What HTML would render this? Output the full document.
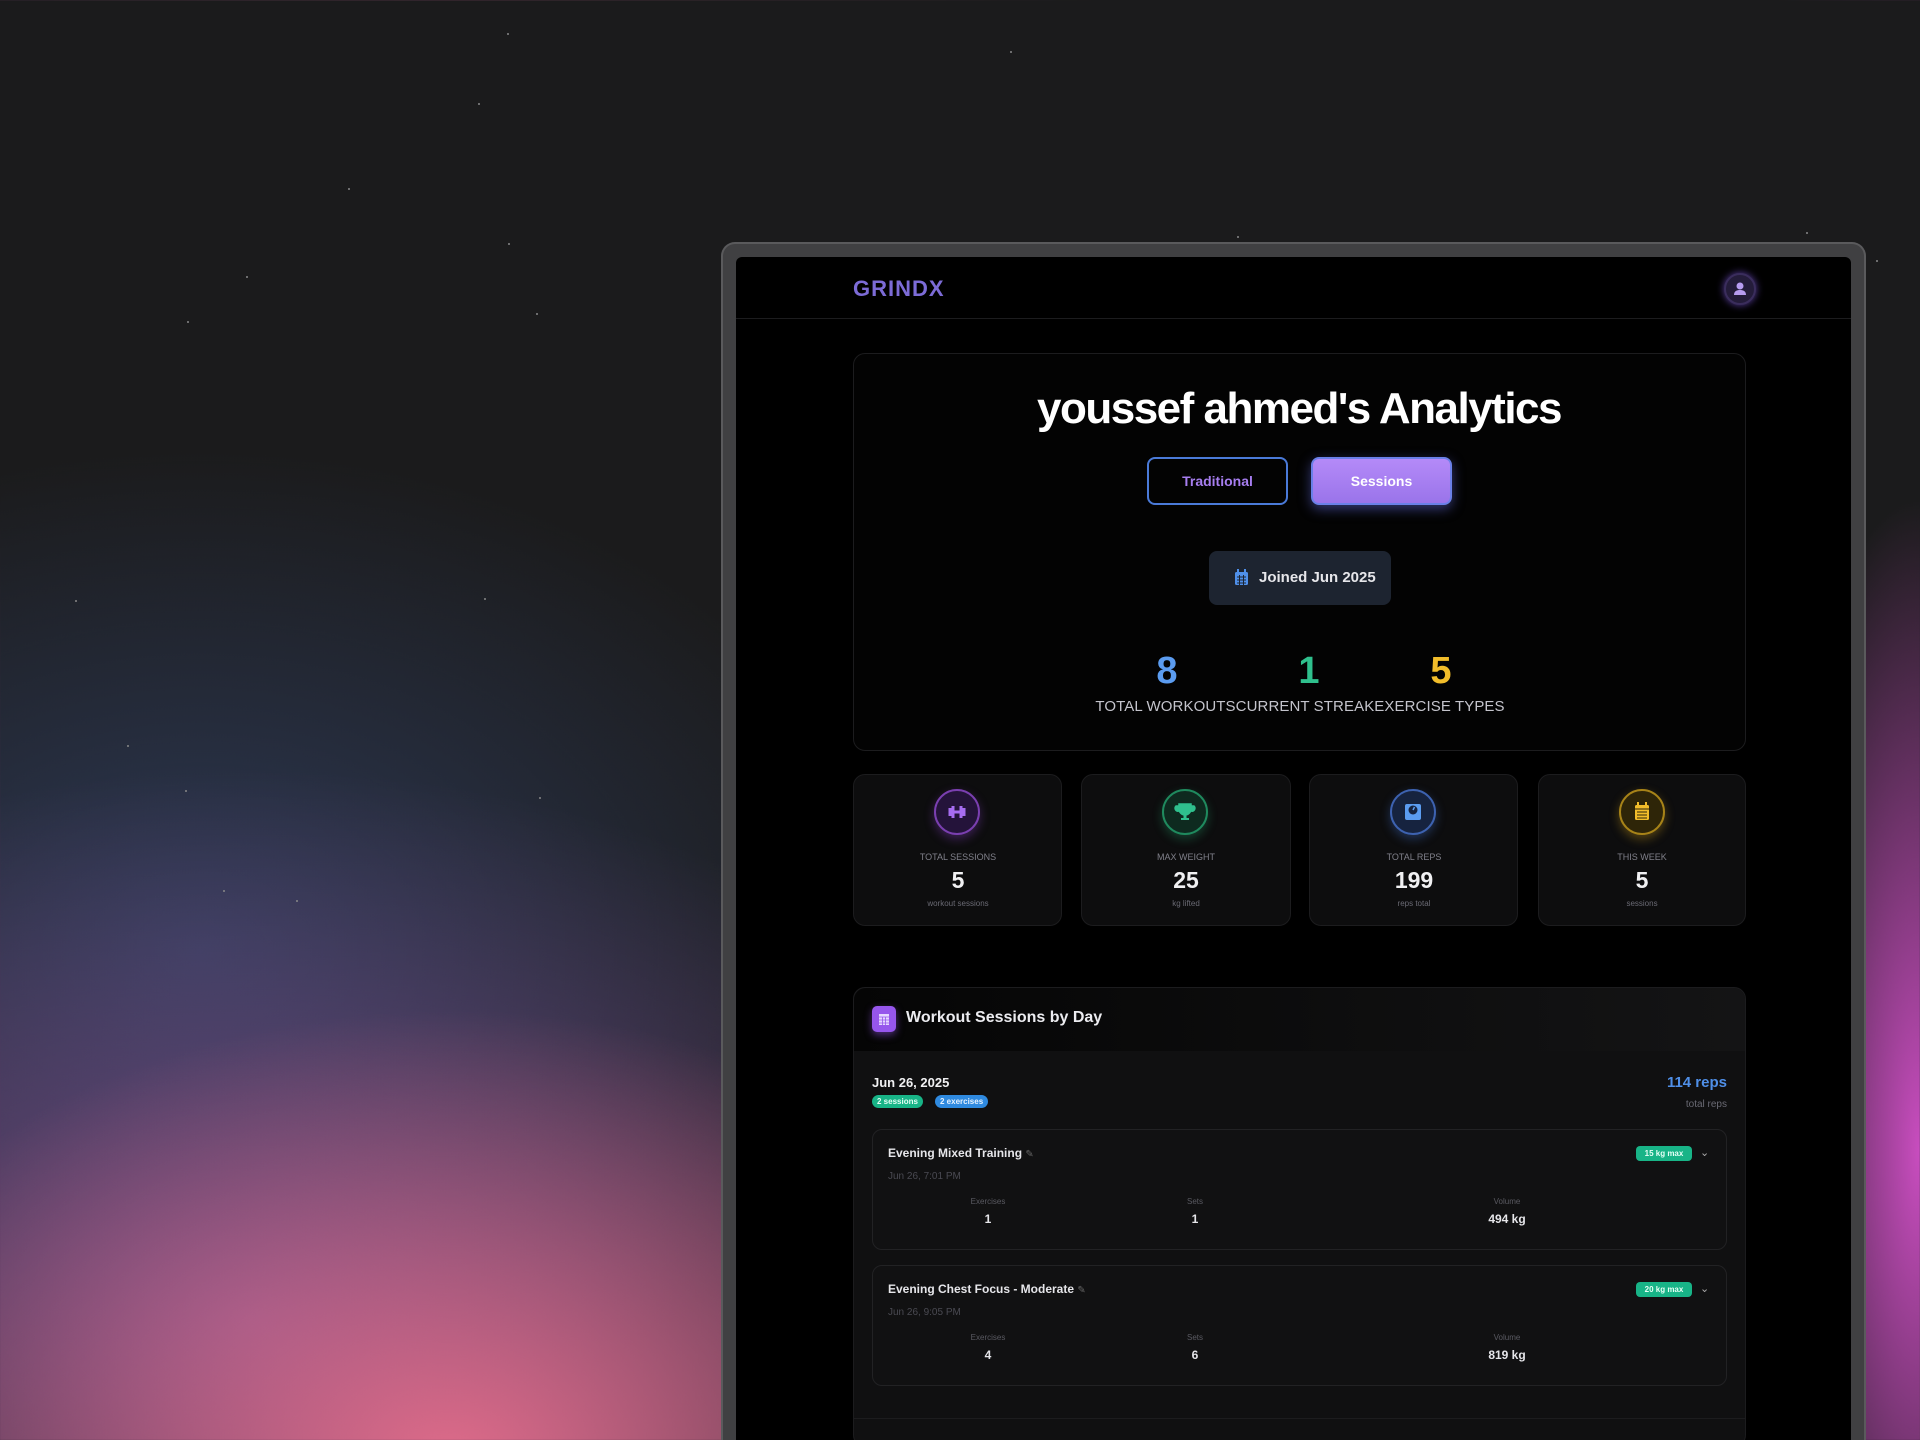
<!DOCTYPE html>
<html style="width:1920px;height:1440px;overflow:hidden"><head><meta charset="utf-8"><style>
*{margin:0;padding:0;box-sizing:border-box}
body{width:1920px;height:1440px;overflow:hidden;position:relative;font-family:"Liberation Sans",sans-serif;
background:
radial-gradient(ellipse 650px 450px at 450px 1460px,rgba(230,110,140,.95),rgba(230,110,140,0) 100%),
radial-gradient(ellipse 850px 550px at 250px 1320px,rgba(120,80,140,.9),rgba(120,80,140,0) 100%),
radial-gradient(ellipse 700px 500px at 200px 950px,rgba(50,65,100,.8),rgba(50,65,100,0) 100%),
radial-gradient(ellipse 160px 650px at 1920px 1150px,rgba(210,80,200,.95),rgba(210,80,200,0) 100%),
#1b1b1c}
.star{position:absolute;width:2px;height:2px;background:#888;border-radius:50%}
.frame{position:absolute;left:721px;top:242px;width:1145px;height:1198px;background:#404042;border-radius:14px 14px 0 0;border:2px solid #5a5a5c;border-bottom:none}
.screen{position:absolute;left:736px;top:257px;width:1115px;height:1183px;background:#000;border-radius:6px 6px 0 0;overflow:hidden}
.a{position:absolute}
.c{transform:translateX(-50%);white-space:nowrap;text-align:center}
.card{position:absolute;background:#0d0d0e;border:1px solid #1c1c1e;border-radius:12px}
</style></head><body>
<div class="star" style="left:507px;top:33px"></div><div class="star" style="left:1010px;top:51px"></div>
<div class="star" style="left:478px;top:103px"></div><div class="star" style="left:348px;top:188px"></div>
<div class="star" style="left:508px;top:243px"></div><div class="star" style="left:246px;top:276px"></div>
<div class="star" style="left:187px;top:321px"></div><div class="star" style="left:536px;top:313px"></div>
<div class="star" style="left:75px;top:600px"></div><div class="star" style="left:484px;top:598px"></div>
<div class="star" style="left:127px;top:745px"></div><div class="star" style="left:185px;top:790px"></div>
<div class="star" style="left:223px;top:890px"></div><div class="star" style="left:296px;top:900px"></div>
<div class="star" style="left:1806px;top:232px"></div><div class="star" style="left:1876px;top:260px"></div>
<div class="star" style="left:539px;top:797px"></div><div class="star" style="left:1237px;top:236px"></div>
<div class="frame"></div>
<div class="screen"></div>
<div class="a" style="left:736px;top:318px;width:1115px;height:1px;background:#1c1c1e"></div>
<div class="a" style="left:853px;top:276px;font-size:22px;font-weight:700;letter-spacing:1px;color:#7c6bd6">GRINDX</div>
<div class="a" style="left:1724px;top:273px;width:32px;height:32px;border-radius:50%;background:#241c3a;border:2px solid #3a2d5c;box-shadow:0 0 8px #5b3fa0"><svg width="28" height="28" viewBox="0 0 28 28"><circle cx="14" cy="11" r="3.5" fill="#b79cf0"/><path d="M8 20c0-4 3-5 6-5s6 1 6 5z" fill="#b79cf0"/></svg></div>

<div class="card" style="left:853px;top:353px;width:893px;height:398px;background:#030303"></div>
<div class="a c" style="left:1299px;top:384px;font-size:44px;font-weight:700;color:#fff;letter-spacing:-1.5px">youssef ahmed's Analytics</div>
<div class="a" style="left:1147px;top:457px;width:141px;height:48px;border:2px solid #4a7ad8;border-radius:8px;color:#a77ef0;font-size:14px;font-weight:700;text-align:center;line-height:44px">Traditional</div>
<div class="a" style="left:1311px;top:457px;width:141px;height:48px;border:2px solid #6a80e8;border-radius:8px;background:linear-gradient(#b48af8,#9a74ea);color:#fff;font-size:14px;font-weight:700;text-align:center;line-height:44px;box-shadow:0 4px 12px rgba(100,110,230,.5)">Sessions</div>
<div class="a" style="left:1209px;top:551px;width:182px;height:54px;background:#1d2430;border-radius:8px;color:#e6e6ea;font-size:15px;font-weight:700;line-height:54px;padding-left:50px">Joined Jun 2025</div>
<svg class="a" style="left:1234px;top:569px" width="15" height="17" viewBox="0 0 15 17"><rect x="1" y="3" width="13" height="13" rx="1.5" fill="#4f8fe8"/><rect x="3" y="0" width="2" height="4" fill="#4f8fe8"/><rect x="10" y="0" width="2" height="4" fill="#4f8fe8"/><path d="M3 8h9M3 11h9M3 14h9M5.5 6v10M9.5 6v10" stroke="#1d2430" stroke-width="1"/></svg>
<div class="a c" style="left:1167px;top:650px;font-size:38px;font-weight:700;color:#5b9cf0">8</div>
<div class="a c" style="left:1309px;top:650px;font-size:38px;font-weight:700;color:#2fc08d">1</div>
<div class="a c" style="left:1441px;top:650px;font-size:38px;font-weight:700;color:#f2bd2a">5</div>
<div class="a c" style="left:1300px;top:698px;font-size:15px;color:#c4c4cc;letter-spacing:.1px">TOTAL WORKOUTSCURRENT STREAKEXERCISE TYPES</div>

<div class="card" style="left:853px;top:774px;width:209px;height:152px"></div>
<div class="card" style="left:1081px;top:774px;width:210px;height:152px"></div>
<div class="card" style="left:1309px;top:774px;width:209px;height:152px"></div>
<div class="card" style="left:1538px;top:774px;width:208px;height:152px"></div>
<div class="a" style="left:934px;top:789px;width:46px;height:46px;border-radius:50%;border:2px solid #7a3fb0;background:#24133a;box-shadow:0 4px 10px rgba(150,70,220,.35)"><svg width="42" height="42" viewBox="0 0 42 42"><path d="M14 17v8M17 15v12M25 15v12M28 17v8M17 21h8" stroke="#a66cf0" stroke-width="3"/></svg></div>
<div class="a" style="left:1162px;top:789px;width:46px;height:46px;border-radius:50%;border:2px solid #1f8a5e;background:#0e2a1f;box-shadow:0 4px 10px rgba(40,180,120,.3)"><svg width="42" height="42" viewBox="0 0 42 42"><path d="M15 13h12v5a6 6 0 0 1-12 0z M15 15h-3a3 3 0 0 0 3 5 M27 15h3a3 3 0 0 1-3 5" fill="#2fc08d" stroke="#2fc08d" stroke-width="1.5"/><path d="M19.5 23h3v4h-3zM17 27h8v2h-8z" fill="#2fc08d"/></svg></div>
<div class="a" style="left:1390px;top:789px;width:46px;height:46px;border-radius:50%;border:2px solid #3d62b0;background:#16233f;box-shadow:0 4px 10px rgba(70,120,220,.35)"><svg width="42" height="42" viewBox="0 0 42 42"><rect x="13" y="13" width="16" height="16" rx="2" fill="#5b9cf0"/><circle cx="21" cy="19" r="4.5" fill="#16233f"/><path d="M21 19l1.5-3" stroke="#5b9cf0" stroke-width="1.5"/></svg></div>
<div class="a" style="left:1619px;top:789px;width:46px;height:46px;border-radius:50%;border:2px solid #a78318;background:#2e2508;box-shadow:0 4px 10px rgba(220,170,30,.35)"><svg width="42" height="42" viewBox="0 0 42 42"><rect x="14" y="14" width="14" height="15" rx="1.5" fill="#f2bd2a"/><rect x="16" y="11" width="2" height="4" fill="#f2bd2a"/><rect x="24" y="11" width="2" height="4" fill="#f2bd2a"/><path d="M14 18h14M16 21h10M16 24h10M16 27h10" stroke="#2e2508" stroke-width="1"/></svg></div>
<div class="a c" style="left:958px;top:852px;font-size:9px;color:#80808a">TOTAL SESSIONS</div>
<div class="a c" style="left:1186px;top:852px;font-size:9px;color:#80808a">MAX WEIGHT</div>
<div class="a c" style="left:1414px;top:852px;font-size:9px;color:#80808a">TOTAL REPS</div>
<div class="a c" style="left:1642px;top:852px;font-size:9px;color:#80808a">THIS WEEK</div>
<div class="a c" style="left:958px;top:867px;font-size:23px;font-weight:700;color:#f0f0f2">5</div>
<div class="a c" style="left:1186px;top:867px;font-size:23px;font-weight:700;color:#f0f0f2">25</div>
<div class="a c" style="left:1414px;top:867px;font-size:23px;font-weight:700;color:#f0f0f2">199</div>
<div class="a c" style="left:1642px;top:867px;font-size:23px;font-weight:700;color:#f0f0f2">5</div>
<div class="a c" style="left:958px;top:899px;font-size:8px;color:#6a6a74">workout sessions</div>
<div class="a c" style="left:1186px;top:899px;font-size:8px;color:#6a6a74">kg lifted</div>
<div class="a c" style="left:1414px;top:899px;font-size:8px;color:#6a6a74">reps total</div>
<div class="a c" style="left:1642px;top:899px;font-size:8px;color:#6a6a74">sessions</div>

<div class="a" style="left:853px;top:987px;width:893px;height:460px;background:#101011;border:1px solid #1c1c1e;border-radius:12px"></div>
<div class="a" style="left:854px;top:988px;width:891px;height:63px;background:linear-gradient(90deg,#050505,#141415);border-radius:12px 12px 0 0"></div>
<div class="a" style="left:872px;top:1006px;width:24px;height:26px;border-radius:5px;background:#9656ec;box-shadow:0 3px 8px rgba(150,86,236,.5)"><svg width="24" height="26" viewBox="0 0 24 26"><rect x="7" y="8" width="10" height="11" fill="#e6d8ff"/><path d="M7 11h10M7 14h10M7 17h10M10.5 11v8M13.5 11v8" stroke="#9656ec" stroke-width=".8"/></svg></div>
<div class="a" style="left:906px;top:1009px;font-size:16px;font-weight:700;color:#ececf0">Workout Sessions by Day</div>
<div class="a" style="left:872px;top:1075px;font-size:13px;font-weight:700;color:#f0f0f2">Jun 26, 2025</div>
<div class="a" style="left:872px;top:1095px;height:13px;padding:0 5px;border-radius:7px;background:#18b487;font-size:8px;font-weight:700;color:#e6fff6;line-height:13px">2 sessions</div>
<div class="a" style="left:935px;top:1095px;height:13px;padding:0 5px;border-radius:7px;background:#2f8ae0;font-size:8px;font-weight:700;color:#e6f2ff;line-height:13px">2 exercises</div>
<div class="a" style="right:193px;top:1074px;font-size:15px;font-weight:700;color:#4f8fe8">114 reps</div>
<div class="a" style="right:193px;top:1099px;font-size:10px;color:#6a6a74">total reps</div>

<div class="a" style="left:872px;top:1129px;width:855px;height:121px;background:#111112;border:1px solid #222224;border-radius:10px"></div>
<div class="a" style="left:872px;top:1265px;width:855px;height:121px;background:#111112;border:1px solid #222224;border-radius:10px"></div>

<div class="a" style="left:888px;top:1146px;font-size:12px;font-weight:700;color:#e6e6ea">Evening Mixed Training <span style="color:#666;font-weight:400;font-size:10px">&#9998;</span></div>
<div class="a" style="left:888px;top:1171px;font-size:10px;color:#4a4a52">Jun 26, 7:01 PM</div>
<div class="a c" style="left:988px;top:1197px;font-size:8px;color:#5a5a62">Exercises</div>
<div class="a c" style="left:1195px;top:1197px;font-size:8px;color:#5a5a62">Sets</div>
<div class="a c" style="left:1507px;top:1197px;font-size:8px;color:#5a5a62">Volume</div>
<div class="a c" style="left:988px;top:1212px;font-size:12px;font-weight:700;color:#e6e6ea">1</div>
<div class="a c" style="left:1195px;top:1212px;font-size:12px;font-weight:700;color:#e6e6ea">1</div>
<div class="a c" style="left:1507px;top:1212px;font-size:12px;font-weight:700;color:#e6e6ea">494 kg</div>
<div class="a" style="left:1636px;top:1146px;width:56px;height:15px;border-radius:4px;background:#18b487;font-size:8px;font-weight:700;color:#e6fff6;text-align:center;line-height:15px">15 kg max</div>
<div class="a" style="left:1700px;top:1146px;font-size:11px;color:#aaa">&#8964;</div>

<div class="a" style="left:888px;top:1282px;font-size:12px;font-weight:700;color:#e6e6ea">Evening Chest Focus - Moderate <span style="color:#666;font-weight:400;font-size:10px">&#9998;</span></div>
<div class="a" style="left:888px;top:1307px;font-size:10px;color:#4a4a52">Jun 26, 9:05 PM</div>
<div class="a c" style="left:988px;top:1333px;font-size:8px;color:#5a5a62">Exercises</div>
<div class="a c" style="left:1195px;top:1333px;font-size:8px;color:#5a5a62">Sets</div>
<div class="a c" style="left:1507px;top:1333px;font-size:8px;color:#5a5a62">Volume</div>
<div class="a c" style="left:988px;top:1348px;font-size:12px;font-weight:700;color:#e6e6ea">4</div>
<div class="a c" style="left:1195px;top:1348px;font-size:12px;font-weight:700;color:#e6e6ea">6</div>
<div class="a c" style="left:1507px;top:1348px;font-size:12px;font-weight:700;color:#e6e6ea">819 kg</div>
<div class="a" style="left:1636px;top:1282px;width:56px;height:15px;border-radius:4px;background:#18b487;font-size:8px;font-weight:700;color:#e6fff6;text-align:center;line-height:15px">20 kg max</div>
<div class="a" style="left:1700px;top:1282px;font-size:11px;color:#aaa">&#8964;</div>
<div class="a" style="left:854px;top:1418px;width:891px;height:1px;background:#1c1c1e"></div>
</body></html>
